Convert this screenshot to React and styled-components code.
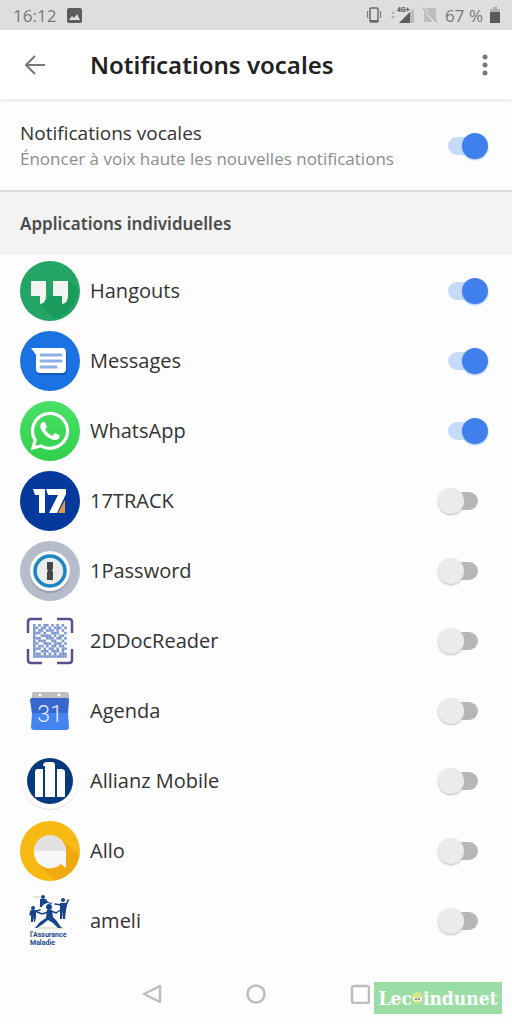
import React, { useState } from 'react'
import styled, { createGlobalStyle } from 'styled-components'
import { FaWhatsapp } from 'react-icons/fa'

const GlobalStyle = createGlobalStyle`
  * {
    box-sizing: border-box;
  }
  body {
    margin: 0;
    background: #fdfdfd;
    color: #333;
    font-family: 'Open Sans', 'Noto Sans', sans-serif;
  }
`

const Screen = styled.div`
  min-height: 100vh;
  display: flex;
  flex-direction: column;
`

const StatusBar = styled.div`
  height: 30px;
  padding: 0 12px 0 13px;
  display: flex;
  align-items: center;
  justify-content: space-between;
  background: #dedede;
  color: #777;
  font-size: 17px;
`

const StatusGroup = styled.div`
  display: flex;
  align-items: center;
  gap: ${(props) => props.$gap}px;
`

const Header = styled.header`
  height: 70px;
  padding: 0 10px 0 18px;
  display: flex;
  align-items: center;
  background: #fff;
  border-bottom: 1px solid #eee;
  box-shadow: 0 1px 3px #e4e4e4;
`

const IconButton = styled.button`
  display: flex;
  align-items: center;
  justify-content: center;
  width: 34px;
  height: 40px;
  padding: 0;
  border: 0;
  background: none;
  color: #777;
`

const Title = styled.h1`
  flex: 1;
  margin: 0 0 0 38px;
  font-family: 'Noto Sans', sans-serif;
  font-size: 24px;
  line-height: 32px;
  font-weight: 600;
  color: #222;
`

const MainSetting = styled.label`
  height: 92px;
  padding: 1px 24px 0 20px;
  display: flex;
  align-items: center;
  justify-content: space-between;
  border-bottom: 2px solid #dcdcdc;
`

const SettingText = styled.span`
  display: flex;
  flex-direction: column;
`

const SettingName = styled.span`
  font-size: 19px;
  line-height: 26px;
`

const SettingHint = styled.span`
  font-size: 17px;
  line-height: 26px;
  color: #8c8c8c;
`

const SectionTitle = styled.h2`
  margin: 0;
  height: 63px;
  padding: 0 20px;
  display: flex;
  align-items: center;
  background: #f3f3f3;
  color: #4c4c4c;
  font-family: 'Noto Sans', sans-serif;
  font-size: 17px;
  font-weight: 600;
`

const AppList = styled.ul`
  flex: 1;
  margin: 0;
  padding: 1px 0 0;
  list-style: none;
`

const AppRow = styled.label`
  height: 70px;
  padding: 0 24px 0 20px;
  display: flex;
  align-items: center;
  gap: 10px;
`

const AppIcon = styled.span`
  display: flex;
  align-items: center;
  justify-content: center;
  width: 60px;
  height: 60px;
  border-radius: 50%;
  background: ${(props) => props.$bg || 'none'};
  color: #fff;
`

const AppName = styled.span`
  flex: 1;
  font-size: 20px;
  line-height: 28px;
`

const Switch = styled.input.attrs({ type: 'checkbox', role: 'switch' })`
  appearance: none;
  position: relative;
  flex: none;
  width: 50px;
  height: 26px;
  margin: 0;

  &::before {
    content: '';
    position: absolute;
    inset: 4px 10px;
    border-radius: 9px;
    background: #b6b6b6;
  }
  &::after {
    content: '';
    position: absolute;
    top: 0;
    left: 0;
    width: 26px;
    height: 26px;
    border-radius: 50%;
    background: #ebebeb;
    box-shadow: 0 1px 2px #bbb;
  }
  &:checked::before {
    background: #c6dbfa;
  }
  &:checked::after {
    left: 24px;
    background: #3f80ec;
    box-shadow: 0 1px 2px #9cbcf0;
  }
`

const NavBar = styled.nav`
  position: relative;
  height: 60px;
  display: flex;
  align-items: center;
  justify-content: center;
  gap: 70px;
`

const Watermark = styled.div`
  position: absolute;
  right: 10px;
  bottom: 10px;
  width: 128px;
  height: 32px;
  display: flex;
  align-items: center;
  justify-content: center;
  background: #9adea5;
  color: #fff;
  font-family: 'DejaVu Serif Condensed', 'DejaVu Serif', serif;
  font-size: 19px;
  font-weight: bold;
`

function Hangouts() {
  return (
    <svg width="60" height="60" viewBox="0 0 60 60">
      <circle cx="30" cy="30" r="30" fill="#23a566" />
      <path d="M21 43 49 20 58 28A30 30 0 0 1 34 57Z" fill="#1a9a5b" />
      <path d="M11 20h15v15q0 7-6 8v-8h-9zM33 20h15v15q0 7-6 8v-8h-9z" fill="#f4f4f2" />
    </svg>
  )
}

function Messages() {
  return (
    <svg width="60" height="60" viewBox="0 0 60 60">
      <circle cx="30" cy="30" r="30" fill="#1b72e3" />
      <path d="M12 19h31q4 0 4 4v17q0 4-4 4H20q-4 0-4-4V25z" fill="#1459b8" />
      <path d="M11 17h31q4 0 4 4v17q0 4-4 4H20q-4 0-4-4V24z" fill="#fff" />
      <path d="M21 24h20M21 30h20M21 36h15" stroke="#8faee4" strokeWidth="3" strokeLinecap="round" />
    </svg>
  )
}

function Track() {
  return (
    <svg width="60" height="60" viewBox="0 0 60 60">
      <path d="M45 29V42H38z" fill="#e29a4c" />
      <path d="M13 18h12v24h-6V24h-4zM26 18h20v5l-9 19h-8l9-18H28z" fill="#fff" />
    </svg>
  )
}

function OnePassword() {
  return (
    <svg width="60" height="60" viewBox="0 0 60 60">
      <circle cx="30" cy="32" r="20" fill="#98a0af" />
      <circle cx="30" cy="30" r="20" fill="#fafafa" />
      <circle cx="30" cy="30" r="15" fill="#ebebeb" stroke="#1c86c4" strokeWidth="3.5" />
      <path d="M27 21h6v7l-1 1 1 2v8h-6v-8l1-1-1-2z" fill="#454545" />
    </svg>
  )
}

const qrRows = [
  '1010110101010',
  '1101101011101',
  '1011011101010',
  '1110100111001',
  '1001111010110',
  '1110011101101',
  '1011100110010',
  '1100111011101',
  '1011010110110',
  '1110101101011',
  '1001110111010',
  '1110101010111',
  '1111111111111',
]

function DocReader() {
  return (
    <svg width="60" height="60" viewBox="0 0 60 60">
      <path d="M8 22V11q0-3 3-3h11M37 8h12q3 0 3 3v11M52 38v11q0 3-3 3H37M22 52H11q-3 0-3-3V38" fill="none" stroke="#57508d" strokeWidth="2.5" />
      {qrRows.map((row, y) =>
        row.split('').map((cell, x) =>
          cell === '1' ? <path key={`${x}-${y}`} d={`M${13 + x * 2.6} ${13 + y * 2.6}h2.6v2.6h-2.6z`} fill="#7f97d0" /> : null
        )
      )}
    </svg>
  )
}

function Agenda() {
  return (
    <svg width="60" height="60" viewBox="0 0 60 60">
      <path d="M14 11h32q3 0 3 3v5H12v-6q0-2 2-2z" fill="#bdbdbd" />
      <circle cx="20" cy="14" r="1.5" fill="#fff" />
      <circle cx="39" cy="14" r="1.5" fill="#fff" />
      <path d="M12 17h35q2 0 2 2l-1 14H12L10 19q0-2 2-2z" fill="#3768d0" />
      <path d="M12 32h36l1 14q0 3-3 3H14q-3 0-3-3z" fill="#4484f0" />
      <text x="30" y="41" textAnchor="middle" fontFamily="Roboto" fontSize="23" fontWeight="300" fill="#e6eefc">31</text>
    </svg>
  )
}

function Allianz() {
  return (
    <svg width="60" height="60" viewBox="0 0 60 60">
      <circle cx="30" cy="31" r="28" fill="#e2e2e2" />
      <circle cx="30" cy="30" r="28" fill="#fff" />
      <circle cx="30" cy="30" r="23" fill="#063a7c" />
      <path d="M15 46V21q0-3 3-3h5v28zM25 46V15h-2q0-4 4-4h5q3 0 3 3v32zM37 46V18h4q4 0 4 3v25z" fill="#fff" />
    </svg>
  )
}

function Allo() {
  return (
    <svg width="60" height="60" viewBox="0 0 60 60">
      <circle cx="30" cy="30" r="30" fill="#f7b912" />
      <path d="M41 18 59 34A30 30 0 0 1 35 59L20 45z" fill="#eeaa10" />
      <path d="M46 30V47l-5-4A16 16 0 1 1 46 30z" fill="#f6f6f6" />
      <path d="M14 30a16 16 0 0 1 32 0z" fill="#e2e2e2" />
    </svg>
  )
}

function Ameli() {
  return (
    <svg width="60" height="60" viewBox="0 0 60 60">
      <path d="M13 6h12M42 9h9M18 37h26" stroke="#c9d3a5" strokeWidth="1" />
      <g fill="#17458c">
        <circle cx="29" cy="16" r="3" />
        <circle cx="23" cy="6" r="2" />
        <circle cx="43" cy="9" r="2" />
        <circle cx="13" cy="17" r="2" />
        <path d="M27 19h5l1 7 3 3 5 7 1 1h-4l-5-5-5-3-5 4-6 4h-2l5-6 6-4z" />
        <path d="M40 12h6l2-4 1 1-2 5-1 5-1 9h-2v-8l-1 8h-2V16z" />
        <path d="M11 19h5v7l-1 5h-1v-5l-1 5h-2z" />
        <path d="M20 8h6l2 3 4 1v1l-5-1-4 2-1 2h-2z" />
      </g>
      <g fill="none" stroke="#17458c" strokeLinecap="round">
        <path d="M28 21 22 23 17 21M31 20l5 2 6-4M35 13l6 1M11 20l-1 4M16 20l4-1" strokeWidth="1.5" />
      </g>
      <text x="10" y="46" fontFamily="Liberation Sans Narrow, Roboto" fontSize="7" fontWeight="700" fill="#17458c">l’Assurance</text>
      <text x="10" y="54" fontFamily="Liberation Sans Narrow, Roboto" fontSize="7" fontWeight="700" fill="#17458c">Maladie</text>
    </svg>
  )
}

const apps = [
  { name: 'Hangouts', icon: <Hangouts />, on: true },
  { name: 'Messages', icon: <Messages />, on: true },
  { name: 'WhatsApp', icon: <FaWhatsapp size={44} />, bg: 'linear-gradient(#4be068, #2fd04a)', on: true },
  { name: '17TRACK', icon: <Track />, bg: '#053a9c' },
  { name: '1Password', icon: <OnePassword />, bg: '#b6bcca' },
  { name: '2DDocReader', icon: <DocReader /> },
  { name: 'Agenda', icon: <Agenda /> },
  { name: 'Allianz Mobile', icon: <Allianz /> },
  { name: 'Allo', icon: <Allo /> },
  { name: 'ameli', icon: <Ameli /> },
]

function SystemBar() {
  return (
    <StatusBar>
      <StatusGroup $gap={11}>
        <span>16:12</span>
        <svg width="15" height="15" viewBox="0 0 15 15">
          <rect width="15" height="15" rx="2" fill="#5c5c5c" />
          <path d="M2 12l3-4 2 2 3-4 3 6z" fill="#dedede" />
        </svg>
      </StatusGroup>
      <StatusGroup $gap={7}>
        <svg width="18" height="16" viewBox="0 0 18 16" fill="none" stroke="#686868">
          <rect x="5" y="1" width="8" height="14" rx="1" strokeWidth="1.5" />
          <path d="M5 14h8" strokeWidth="2" />
          <path d="M3 4 2 6l1 1-1 2 1 2M15 4l1 2-1 1 1 2-1 2" />
        </svg>
        <svg width="25" height="18" viewBox="0 0 25 18">
          <path d="M1 8 3 5l2 3zM1 10l2 3 2-3z" fill="#b5b5b5" />
          <path d="M24 2v15H9z" fill="#bcbcbc" />
          <path d="M20 6v11H9z" fill="#5c5c5c" />
          <text x="7" y="6" fontFamily="Roboto" fontSize="7" fontWeight="700" fill="#555">4G+</text>
        </svg>
        <svg width="16" height="16" viewBox="0 0 16 16">
          <path d="M4 1h10v14z" fill="#bdbdbd" />
          <path d="M2 4v11h9z" fill="#bdbdbd" />
          <path d="M1 1 15 15" stroke="#b0b0b0" strokeWidth="1.5" />
        </svg>
        <span>67 %</span>
        <svg width="10" height="16" viewBox="0 0 10 16">
          <path d="M3 0h4v2h3v4H0V2h3z" fill="#b0b0b0" />
          <path d="M0 5h10v11H0z" fill="#5a5a5a" />
        </svg>
      </StatusGroup>
    </StatusBar>
  )
}

function App() {
  const [spoken, setSpoken] = useState(true)
  const [enabled, setEnabled] = useState(apps.map((app) => Boolean(app.on)))

  const toggle = (index) => setEnabled(enabled.map((on, i) => (i === index ? !on : on)))

  return (
    <Screen>
      <GlobalStyle />
      <SystemBar />
      <Header>
        <IconButton type="button" aria-label="Retour">
          <svg width="20" height="20" viewBox="0 0 20 20" fill="none" stroke="currentColor" strokeWidth="2">
            <path d="M20 10H2M10 1l-9 9 9 9" />
          </svg>
        </IconButton>
        <Title>Notifications vocales</Title>
        <IconButton type="button" aria-label="Plus">
          <svg width="6" height="22" viewBox="0 0 6 22" fill="currentColor">
            <circle cx="3" cy="3" r="2.5" />
            <circle cx="3" cy="11" r="2.5" />
            <circle cx="3" cy="19" r="2.5" />
          </svg>
        </IconButton>
      </Header>
      <MainSetting>
        <SettingText>
          <SettingName>Notifications vocales</SettingName>
          <SettingHint>Énoncer à voix haute les nouvelles notifications</SettingHint>
        </SettingText>
        <Switch checked={spoken} onChange={() => setSpoken(!spoken)} />
      </MainSetting>
      <SectionTitle>Applications individuelles</SectionTitle>
      <AppList>
        {apps.map((app, index) => (
          <li key={app.name}>
            <AppRow>
              <AppIcon $bg={app.bg}>{app.icon}</AppIcon>
              <AppName>{app.name}</AppName>
              <Switch checked={enabled[index]} onChange={() => toggle(index)} />
            </AppRow>
          </li>
        ))}
      </AppList>
      <NavBar>
        <IconButton type="button" aria-label="Précédent">
          <svg width="20" height="20" viewBox="0 0 20 20" fill="none" stroke="#bdbdbd" strokeWidth="2.5" strokeLinejoin="round">
            <path d="M18 2v16L2 10z" />
          </svg>
        </IconButton>
        <IconButton type="button" aria-label="Accueil">
          <svg width="20" height="20" viewBox="0 0 20 20" fill="none" stroke="#bdbdbd" strokeWidth="2.5">
            <circle cx="10" cy="10" r="8.5" />
          </svg>
        </IconButton>
        <IconButton type="button" aria-label="Applications récentes">
          <svg width="20" height="20" viewBox="0 0 20 20" fill="none" stroke="#bdbdbd" strokeWidth="2.5">
            <rect x="2" y="2" width="17" height="17" rx="2" />
          </svg>
        </IconButton>
        <Watermark>
          <span>Lec</span>
          <svg width="11" height="12" viewBox="0 0 11 12">
            <ellipse cx="5.5" cy="6" rx="5.5" ry="6" fill="#d4e58c" />
            <circle cx="3.5" cy="7" r="2" fill="#fff" />
            <circle cx="7.5" cy="7" r="2" fill="#fff" />
            <circle cx="4" cy="7" r="1" fill="#666" />
            <circle cx="7" cy="7" r="1" fill="#666" />
          </svg>
          <span>indunet</span>
        </Watermark>
      </NavBar>
    </Screen>
  )
}

export default App
